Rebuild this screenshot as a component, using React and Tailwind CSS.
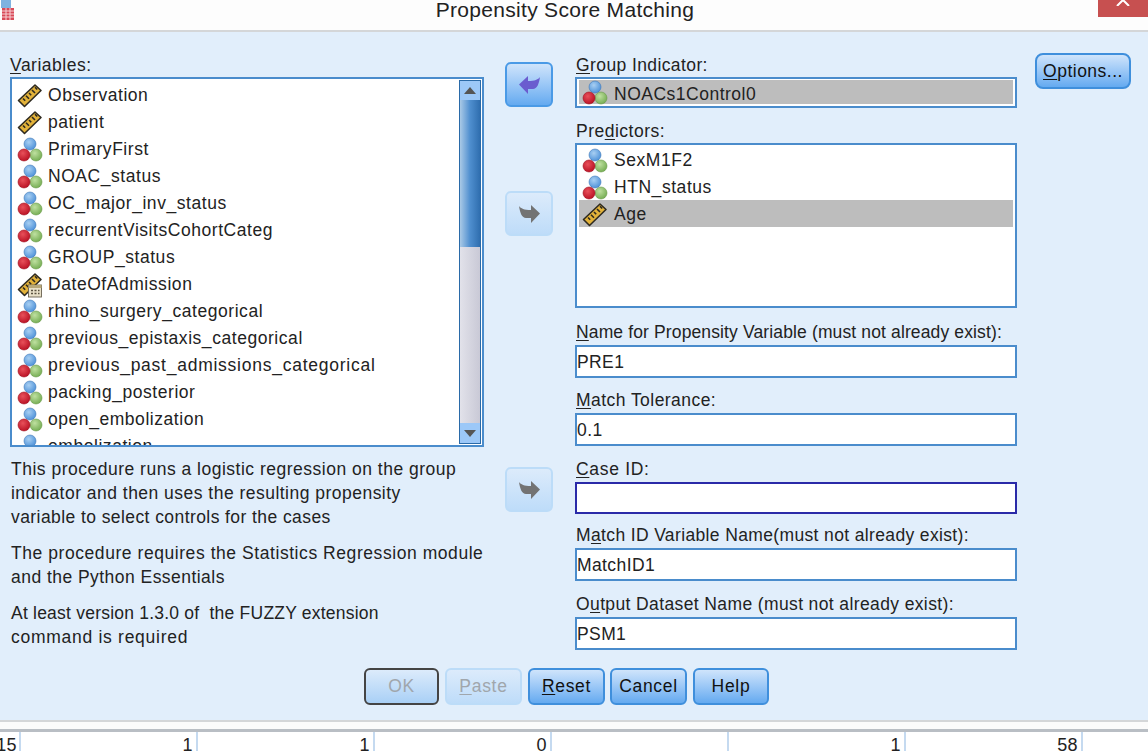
const FONT = "font-['Liberation_Sans',Arial,sans-serif]";

function Nominal() {
  return (
    <svg width="26" height="26" viewBox="0 0 26 26" className="shrink-0">
      <defs>
        <radialGradient id="nb" cx="40%" cy="35%" r="70%"><stop offset="0" stopColor="#a8cff2" /><stop offset="1" stopColor="#4a8fd8" /></radialGradient>
        <radialGradient id="nr" cx="40%" cy="35%" r="70%"><stop offset="0" stopColor="#e8505a" /><stop offset="1" stopColor="#b80f22" /></radialGradient>
        <radialGradient id="ng" cx="40%" cy="35%" r="70%"><stop offset="0" stopColor="#bfe0a0" /><stop offset="1" stopColor="#72ab50" /></radialGradient>
      </defs>
      <circle cx="13" cy="7" r="6" fill="url(#nb)" stroke="#3f78b8" strokeWidth="0.6" />
      <circle cx="19" cy="18" r="6" fill="url(#ng)" stroke="#6a9a4a" strokeWidth="0.6" />
      <circle cx="7" cy="18" r="6" fill="url(#nr)" stroke="#a01020" strokeWidth="0.6" />
    </svg>
  );
}

function Ruler({ calendar }) {
  return (
    <svg width="26" height="26" viewBox="0 0 26 26" className="shrink-0">
      <path d="M1.5 17.5 L18 2 L24 7.5 L7.5 23.5 Z" fill="#e2b23a" stroke="#2e2a20" strokeWidth="1.6" strokeLinejoin="round" />
      <path d="M6 15.5 l2.2 2.2 M9 12.7 l3 3 M12 10 l2.2 2.2 M15 7 l3 3 M18 4.3 l2.2 2.2" stroke="#2e2a20" strokeWidth="1.6" fill="none" />
      {calendar && (
        <g>
          <rect x="11.5" y="13" width="13" height="12" fill="#e8e0c8" stroke="#6a6250" strokeWidth="0.9" />
          <rect x="11.5" y="13" width="13" height="3" fill="#b8a878" />
          <path d="M14 18.5h2M17.5 18.5h2M21 18.5h1.5M14 21.5h2M17.5 21.5h2M21 21.5h1.5" stroke="#5a5240" strokeWidth="1.3" />
        </g>
      )}
    </svg>
  );
}

function Row({ type, name, selected, pred, track = "tracking-[0.55px]" }) {
  return (
    <div className={`flex h-[27px] shrink-0 items-center ${pred ? "gap-[6px] pt-[2px] pl-[3px]" : "gap-[5px] pl-[2px]"} ${selected ? "bg-[#bdbdbd]" : ""}`}>
      {type === "n" ? <Nominal /> : <Ruler calendar={type === "d"} />}
      <span className={`whitespace-nowrap ${track}`}>{name}</span>
    </div>
  );
}

function Label({ u, before, after, className = "tracking-[0.4px]" }) {
  return (
    <div className={`h-[24px] pl-[1px] leading-[24px] whitespace-nowrap ${className}`}>
      {before}
      <span className="underline underline-offset-2">{u}</span>
      {after}
    </div>
  );
}

function Arrow({ active, left }) {
  return (
    <div className={`flex h-[45px] w-[48px] items-center justify-center rounded-[6px] border-2 ${active ? "border-[#4a9ae6] bg-gradient-to-b from-[#cfe4fb] to-[#64aaf0]" : "border-[#bcdcf8] bg-gradient-to-b from-[#dcebfb] to-[#bedcf9]"}`}>
      <svg width="21" height="18" viewBox="0 0 21 18" className={left ? "-scale-x-100" : ""}>
        <path d="M0 1 C2 3.5 5 5 12 5 L12 0 L21 8.5 L12 18 L12 13 L7 13 C3 13 1 8 0 1 Z" fill={active ? "#6a5ccf" : "#737373"} />
      </svg>
    </div>
  );
}

function Field({ value, focus, h = "h-[33px]" }) {
  return (
    <div className={`flex ${h} w-[442px] items-center border-2 bg-white pt-[2px] tracking-[0.4px] ${focus ? "border-[#2a2aa8]" : "border-[#4a8ccc]"}`}>
      {value}
    </div>
  );
}

function Btn({ children, kind = "on", w = "w-[77px]", className = "" }) {
  const cls = {
    on: "border-[#3f8fdc] from-[#cfe4fb] to-[#64aaf0] text-[#111]",
    def: "border-[#444] from-[#dcebfb] to-[#a9d0f6] text-[#a0a6ac]",
    off: "border-[#bcdcf8] from-[#dcebfb] to-[#bedcf9] text-[#a0a6ac]",
  }[kind];
  return (
    <div className={`flex h-[37px] ${w} items-center justify-center rounded-[6px] border-2 bg-gradient-to-b tracking-[0.7px] ${cls} ${className}`}>
      {children}
    </div>
  );
}

const vars = [
  ["s", "Observation"], ["s", "patient"], ["n", "PrimaryFirst"], ["n", "NOAC_status"],
  ["n", "OC_major_inv_status"], ["n", "recurrentVisitsCohortCateg"], ["n", "GROUP_status"],
  ["d", "DateOfAdmission"], ["n", "rhino_surgery_categorical"], ["n", "previous_epistaxis_categorical"],
  ["n", "previous_past_admissions_categorical", "tracking-[0.75px]"], ["n", "packing_posterior"], ["n", "open_embolization"], ["n", "embolization"],
];

export default function App() {
  return (
    <div className={`${FONT} flex h-[751px] w-[1148px] flex-col overflow-hidden bg-white text-[17.5px] text-[#222]`}>
      {/* title bar */}
      <div className="flex h-[32px] shrink-0 items-start justify-between border-b-2 border-[#d4d6d8] bg-[#fdfdfd]">
        <svg width="15" height="20" viewBox="0 0 15 20" className="shrink-0">
          <rect x="1" y="-2" width="10" height="10" fill="#7fb2e0" />
          <rect x="2" y="8" width="12" height="12" fill="#d84a58" />
          <path d="M2 11h12M2 14h12M2 17h12M6 8v12M10 8v12" stroke="#f6d0d4" strokeWidth="1" />
        </svg>
        <div className="ml-[17px] text-[21px] leading-[20px] tracking-[0.3px] text-[#222]">Propensity Score Matching</div>
        <div className="flex h-[17px] w-[50px] items-start justify-center bg-[#c75050]">
          <svg width="14" height="6" viewBox="0 0 14 6"><path d="M1 6 L6 1 L7 0 L8 1 L13 6" stroke="#fff" strokeWidth="2" fill="none" /></svg>
        </div>
      </div>

      {/* dialog */}
      <div className="flex h-[688px] shrink-0 flex-col bg-[#e1eefb]">
        <div className="flex h-[636px] pt-[21px]">
          {/* left column */}
          <div className="ml-[10px] w-[474px]">
            <Label u="V" after="ariables:" className="ml-[-1px] tracking-[0.5px]" />
            <div className="flex h-[370px] border-2 border-[#4a8ccc] bg-white">
              <div className="flex h-full flex-1 flex-col overflow-hidden pt-[3px] pl-[3px]">
                {vars.map(([t, n, tr]) => <Row key={n} type={t} name={n} track={tr} />)}
              </div>
              <div className="my-[1px] mr-[1px] flex w-[22px] flex-col border border-[#2a6aa8] bg-[#dcdce6]">
                <div className="flex h-[19px] items-center justify-center bg-[#9cc8f8]">
                  <div className="h-0 w-0 border-x-[6px] border-b-[7px] border-x-transparent border-b-[#555]" />
                </div>
                <div className="h-[147px] bg-gradient-to-r from-[#a9c9e6] via-[#4f8fcf] to-[#2f6eaf]" />
                <div className="flex-1 bg-gradient-to-r from-[#e2e2ea] to-[#c9c9d6]" />
                <div className="flex h-[20px] items-center justify-center bg-[#9cc8f8]">
                  <div className="h-0 w-0 border-x-[6px] border-t-[7px] border-x-transparent border-t-[#555]" />
                </div>
              </div>
            </div>
            <div className="mt-[10px] pl-[1px] leading-[24px]">
              <div className="tracking-[0.5px]">This procedure runs a logistic regression on the group</div>
              <div className="tracking-[0.48px]">indicator and then uses the resulting propensity</div>
              <div className="tracking-[0.42px]">variable to select controls for the cases</div>
            </div>
            <div className="mt-[12px] pl-[1px] leading-[24px]">
              <div className="tracking-[0.56px]">The procedure requires the Statistics Regression module</div>
              <div className="tracking-[0.46px]">and the Python Essentials</div>
            </div>
            <div className="mt-[12px] pl-[1px] leading-[24px]">
              <div className="tracking-[0.22px]">At least version 1.3.0 of&nbsp; the FUZZY extension</div>
              <div className="tracking-[0.72px]">command is required</div>
            </div>
          </div>

          {/* arrows */}
          <div className="ml-[21px] flex w-[48px] flex-col">
            <div className="mt-[9px]"><Arrow active left /></div>
            <div className="mt-[84px]"><Arrow /></div>
            <div className="mt-[231px]"><Arrow /></div>
          </div>

          {/* right column */}
          <div className="ml-[22px] w-[442px]">
            <Label u="G" after="roup Indicator:" />
            <div className="h-[31px] border-2 border-[#4a8ccc] bg-white px-[2px] pt-[1px]">
              <div className="flex h-[24px] items-center gap-[6px] bg-[#bdbdbd] pt-[2px] pl-[3px]">
                <Nominal />
                <span className="pt-[2px] tracking-[0.5px]">NOACs1Control0</span>
              </div>
            </div>
            <Label before="Pre" u="d" after="ictors:" className="mt-[11px] tracking-[0.5px]" />
            <div className="h-[165px] border-2 border-[#4a8ccc] bg-white px-[2px] pt-[1px]">
              <Row pred type="n" name="SexM1F2" />
              <Row pred type="n" name="HTN_status" />
              <Row pred type="s" name="Age" selected />
            </div>
            <Label u="N" after="ame for Propensity Variable (must not already exist):" className="mt-[12px] tracking-[0.13px]" />
            <div className="mt-[1px]"><Field value="PRE1" /></div>
            <Label u="M" after="atch Tolerance:" className="mt-[10px] tracking-[0.45px]" />
            <div className="mt-[1px]"><Field value="0.1" /></div>
            <Label u="C" after="ase ID:" className="mt-[11px] tracking-[0.7px]" />
            <div className="mt-[1px]"><Field focus value="" h="h-[32px]" /></div>
            <Label before="M" u="a" after="tch ID Variable Name(must not already exist):" className="mt-[9px] tracking-[0.36px]" />
            <div className="mt-[1px]"><Field value="MatchID1" /></div>
            <Label before="O" u="u" after="tput Dataset Name (must not already exist):" className="mt-[11px] tracking-[0.38px]" />
            <div className="mt-[1px]"><Field value="PSM1" /></div>
          </div>

          {/* options */}
          <div className="ml-[18px]">
            <div className="flex h-[36px] w-[96px] items-center justify-center rounded-[8px] border-2 border-[#3f8fdc] bg-gradient-to-b from-[#cfe4fb] to-[#64aaf0] tracking-[0.5px] text-[#111]">
              <span><span className="underline underline-offset-2">O</span>ptions...</span>
            </div>
          </div>
        </div>

        {/* button row */}
        <div className="ml-[-15px] flex justify-center gap-[6px]">
          <Btn kind="def" w="w-[75px]">OK</Btn>
          <Btn kind="off"><span><span className="underline underline-offset-2">P</span>aste</span></Btn>
          <Btn><span><span className="underline underline-offset-2">R</span>eset</span></Btn>
          <Btn className="ml-[-1px]">Cancel</Btn>
          <Btn w="w-[76px]">Help</Btn>
        </div>
      </div>

      {/* window edge */}
      <div className="h-[12px] shrink-0 border-t-2 border-b-[3px] border-t-[#d4d6d8] border-b-[#b9bec4] bg-[#fbfbfb]" />

      {/* data grid peeking out */}
      <div className="flex h-[20px] text-[18px] leading-[26px] tracking-[0.4px]">
        <div className="w-[21px] shrink-0 border-r-2 border-[#c5daf0] pr-[2px] text-right">
          <span className="ml-[-6px] block overflow-hidden">15</span>
        </div>
        {["1", "1", "0", "", "1", "58"].map((v, i) => (
          <div key={i} className="w-[177px] shrink-0 border-r-2 border-[#c5daf0] pr-[3px] text-right">{v}</div>
        ))}
      </div>
    </div>
  );
}
